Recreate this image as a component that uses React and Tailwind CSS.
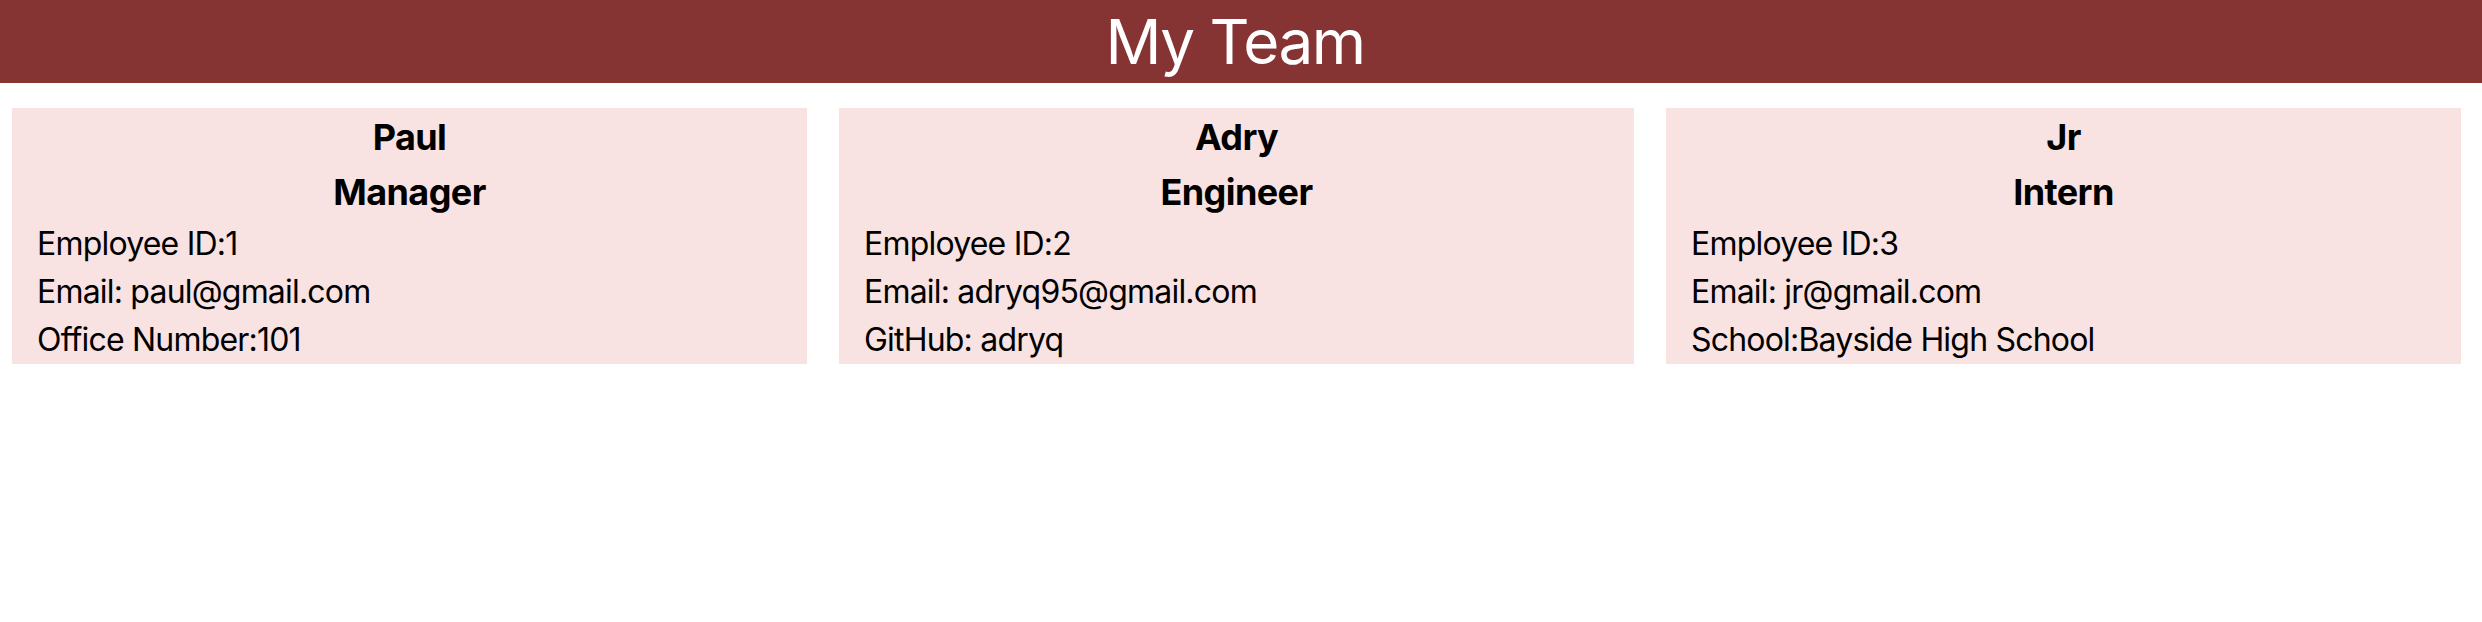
const team = [
  {
    name: "Paul",
    role: "Manager",
    lines: ["Employee ID:1", "Email: paul@gmail.com", "Office Number:101"],
  },
  {
    name: "Adry",
    role: "Engineer",
    lines: ["Employee ID:2", "Email: adryq95@gmail.com", "GitHub: adryq"],
  },
  {
    name: "Jr",
    role: "Intern",
    lines: ["Employee ID:3", "Email: jr@gmail.com", "School:Bayside High School"],
  },
];

const Card = ({ member }) => {
  return (
    <div className="w-[795px] bg-[#f8e2e2] pt-[7px]">
      <h3 className="text-center text-[36px] leading-[44px] font-bold tracking-[-0.6px] text-black">{member.name}</h3>
      <h3 className="mt-[11px] text-center text-[36px] leading-[44px] font-bold tracking-[-0.6px] text-black">{member.role}</h3>
      <div className="mt-[6px] px-[25px] text-[32px] leading-[48px] tracking-[-0.8px] text-black">
        {member.lines.map((line) => (
          <p key={line}>{line}</p>
        ))}
      </div>
    </div>
  );
};

export default function App() {
  return (
    <div className="min-h-[622px] bg-white font-['Inter',sans-serif]">
      <header className="h-[83px] bg-[#853333] flex items-start justify-center pr-[12px]">
        <h1 className="mt-[4px] text-[62px] leading-[75px] text-white tracking-[-1.5px]">My Team</h1>
      </header>
      <div className="flex gap-[32px] pl-[12px] pt-[25px]">
        {team.map((m) => (
          <Card key={m.name} member={m} />
        ))}
      </div>
    </div>
  );
}
